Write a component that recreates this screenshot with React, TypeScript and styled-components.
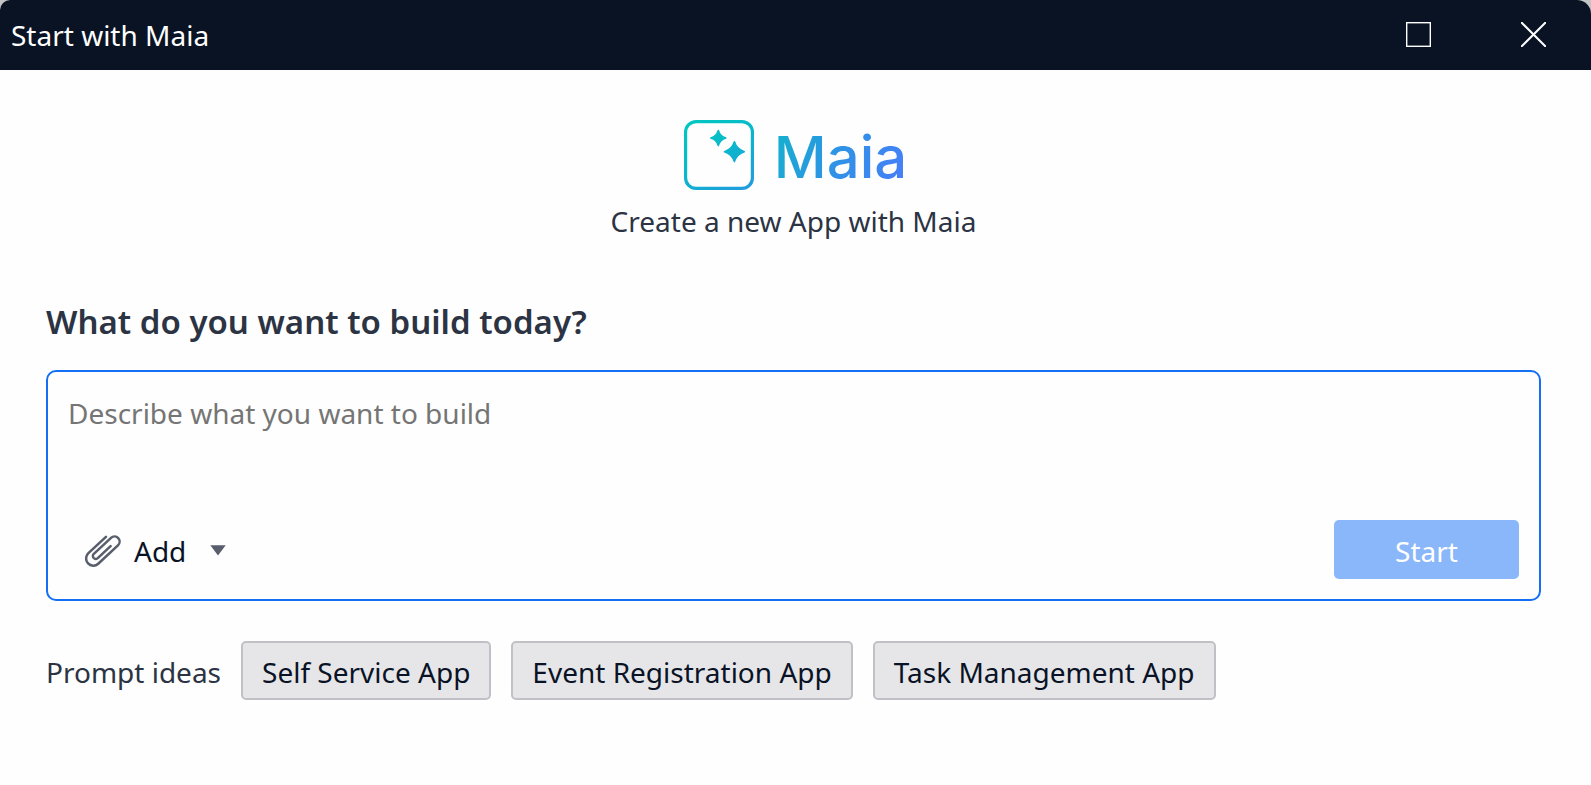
import React, { useState } from "react";
import styled, { createGlobalStyle } from "styled-components";

const GlobalStyle = createGlobalStyle`
  *, *::before, *::after { box-sizing: border-box; }
  body {
    margin: 0;
    background: #c4c4c4;
    font-family: "Noto Sans", "Open Sans", sans-serif;
    font-size: 28px;
    line-height: 40px;
    color: #2c3444;
  }
  button, textarea { font: inherit; }
`;

const Dialog = styled.section`
  display: flex;
  flex-direction: column;
  min-height: 100vh;
  background: #fefefe;
  border-radius: 10px 14px 0 0;
  overflow: hidden;
`;

const TitleBar = styled.header`
  display: flex;
  align-items: center;
  justify-content: space-between;
  height: 70px;
  padding-left: 11px;
  background: #091323;
  color: #fff;
`;

const Title = styled.h1`
  margin: 0;
  font-size: 28px;
  font-weight: 400;
`;

const WindowControls = styled.div`
  display: flex;
  align-self: stretch;
`;

const WindowButton = styled.button`
  display: flex;
  align-items: center;
  justify-content: center;
  width: 115px;
  padding: 0 0 2px;
  border: 0;
  background: transparent;
  color: inherit;
`;

const Content = styled.main`
  padding: 50px 50px 50px 46px;
`;

const Brand = styled.div`
  display: flex;
  flex-direction: column;
  align-items: center;
  gap: 11px;
`;

const Logo = styled.div`
  display: flex;
  align-items: center;
  gap: 20px;
  padding-left: 4px;
`;

const Wordmark = styled.span`
  height: 70px;
  padding-top: 2px;
  font-family: Inter, sans-serif;
  font-size: 58px;
  font-weight: 500;
  line-height: 70px;
  background: linear-gradient(115deg, #12b3cb 0%, #2f92e6 50%, #4a7cfa 100%);
  background-clip: text;
  -webkit-background-clip: text;
  color: transparent;
`;

const Tagline = styled.p`
  margin: 0;
`;

const Question = styled.label`
  display: block;
  margin: 57px 0 24px;
  font-size: 33px;
  font-weight: 600;
  line-height: 48px;
`;

const Composer = styled.div`
  display: flex;
  flex-direction: column;
  padding: 20px;
  border: 2px solid #146ff4;
  border-radius: 10px;
`;

const PromptInput = styled.textarea`
  display: block;
  width: 100%;
  height: 128px;
  padding: 1px 0 0;
  border: 0;
  outline: 0;
  resize: none;
  background: transparent;
  color: #0a1326;
  &::placeholder { color: #757575; opacity: 1; }
`;

const ComposerActions = styled.div`
  display: flex;
  align-items: center;
  justify-content: space-between;
`;

const AddButton = styled.button`
  display: flex;
  align-items: center;
  gap: 12px;
  padding: 2px 17px 0;
  border: 0;
  background: transparent;
  color: #0a1326;
`;

const Caret = styled.svg`
  margin-left: 12px;
`;

const StartButton = styled.button`
  width: 185px;
  height: 59px;
  padding: 2px 0 0;
  border: 0;
  border-radius: 5px;
  background: #8ab6fa;
  color: #fff;
`;

const Ideas = styled.div`
  display: flex;
  align-items: center;
  flex-wrap: wrap;
  gap: 20px;
  margin-top: 40px;
`;

const IdeasLabel = styled.span`
  padding-top: 2px;
`;

const IdeaButton = styled.button`
  height: 59px;
  padding: 2px 19px 0;
  border: 2px solid #c0c0c7;
  border-radius: 5px;
  background: #e6e6e9;
  color: #0a1326;
`;

const MaiaMark = () => (
  <svg width="70" height="70" viewBox="0 0 70 70" aria-hidden="true">
    <defs>
      <linearGradient id="mark" gradientUnits="userSpaceOnUse" x1="10" y1="0" x2="60" y2="76">
        <stop offset="0" stopColor="#02c6c0" />
        <stop offset="0.35" stopColor="#06bcc8" />
        <stop offset="1" stopColor="#2499e0" />
      </linearGradient>
    </defs>
    <rect x="1.6" y="1.6" width="66.8" height="66.8" rx="10.5" fill="none" stroke="url(#mark)" strokeWidth="3.2" />
    <g fill="url(#mark)" stroke="url(#mark)" strokeWidth="1.6" strokeLinejoin="round">
      <path d="M34.3 10.6 Q36 16.4 41.8 18.1 Q36 19.8 34.3 25.6 Q32.6 19.8 26.8 18.1 Q32.6 16.4 34.3 10.6Z" />
      <path d="M50.4 21.8 Q52.7 29.3 60.3 31.7 Q52.7 34.1 50.4 41.6 Q48.1 34.1 40.5 31.7 Q48.1 29.3 50.4 21.8Z" />
    </g>
  </svg>
);

const Paperclip = () => (
  <svg width="37" height="34" viewBox="0 0 37 34" fill="none" stroke="#585e6c" strokeWidth="2.5" strokeLinecap="round" aria-hidden="true">
    <path
      transform="translate(3.4 19.2) rotate(-43)"
      d="M24 0 H0 A7.2 7.2 0 0 0 0 14.4 H27 A5.1 5.1 0 0 0 27 4.2 H3.5 A2.9 2.9 0 0 0 3.5 10 H21"
    />
  </svg>
);

const ideas = ["Self Service App", "Event Registration App", "Task Management App"];

export default function App() {
  const [prompt, setPrompt] = useState("");

  return (
    <>
      <GlobalStyle />
      <Dialog aria-label="Start with Maia">
        <TitleBar>
          <Title>Start with Maia</Title>
          <WindowControls>
            <WindowButton type="button" aria-label="Maximize">
              <svg width="25" height="25" viewBox="0 0 25 25" fill="none" stroke="currentColor" strokeWidth="1.4">
                <rect x="0.7" y="0.7" width="23.6" height="23.6" />
              </svg>
            </WindowButton>
            <WindowButton type="button" aria-label="Close">
              <svg width="25" height="25" viewBox="0 0 25 25" fill="none" stroke="currentColor" strokeWidth="2">
                <path d="M0 0 L25 25 M25 0 L0 25" />
              </svg>
            </WindowButton>
          </WindowControls>
        </TitleBar>
        <Content>
          <Brand>
            <Logo>
              <MaiaMark />
              <Wordmark>Maia</Wordmark>
            </Logo>
            <Tagline>Create a new App with Maia</Tagline>
          </Brand>
          <Question htmlFor="prompt">What do you want to build today?</Question>
          <Composer>
            <PromptInput
              id="prompt"
              placeholder="Describe what you want to build"
              value={prompt}
              onChange={(e) => setPrompt(e.target.value)}
            />
            <ComposerActions>
              <AddButton type="button">
                <Paperclip />
                Add
                <Caret width="16" height="11" viewBox="0 0 16 11" aria-hidden="true">
                  <path d="M0.3 0.3 H15.7 L8 10.6Z" fill="#585e6c" />
                </Caret>
              </AddButton>
              <StartButton type="button">Start</StartButton>
            </ComposerActions>
          </Composer>
          <Ideas>
            <IdeasLabel>Prompt ideas</IdeasLabel>
            {ideas.map((idea) => (
              <IdeaButton key={idea} type="button" onClick={() => setPrompt(idea)}>
                {idea}
              </IdeaButton>
            ))}
          </Ideas>
        </Content>
      </Dialog>
    </>
  );
}
